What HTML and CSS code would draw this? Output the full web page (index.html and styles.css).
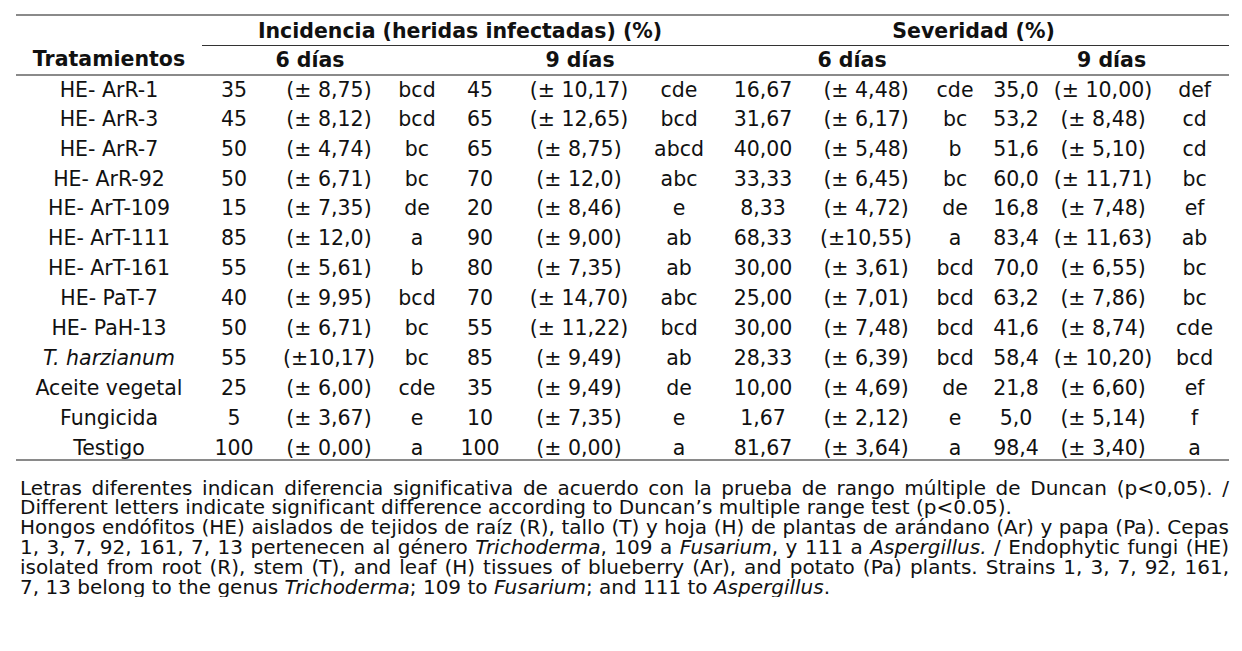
FILE: index.html
```html
<!DOCTYPE html>
<html lang="es">
<head>
<meta charset="utf-8">
<title>Tabla</title>
<link rel="stylesheet" href="styles.css">
</head>
<body>
<div class="page">
<table class="data">
  <colgroup>
    <col class="w1"><col class="w2"><col class="w3"><col class="w4"><col class="w5"><col class="w6"><col class="w7"><col class="w8"><col class="w9"><col class="w10"><col class="w11"><col class="w12"><col class="w13">
  </colgroup>
  <thead>
    <tr class="h1">
      <th class="blank"></th>
      <th colspan="6" class="group">Incidencia (heridas infectadas) (%)</th>
      <th colspan="6" class="group">Severidad (%)</th>
    </tr>
    <tr class="h2">
      <th>Tratamientos</th>
      <th colspan="3" class="d6">6 días</th>
      <th colspan="3">9 días</th>
      <th colspan="3">6 días</th>
      <th colspan="3" class="d9s">9 días</th>
    </tr>
  </thead>
  <tbody>
    <tr><td>HE- ArR-1</td><td>35</td><td>(± 8,75)</td><td>bcd</td><td>45</td><td>(± 10,17)</td><td>cde</td><td>16,67</td><td>(± 4,48)</td><td>cde</td><td>35,0</td><td>(± 10,00)</td><td>def</td></tr>
    <tr><td>HE- ArR-3</td><td>45</td><td>(± 8,12)</td><td>bcd</td><td>65</td><td>(± 12,65)</td><td>bcd</td><td>31,67</td><td>(± 6,17)</td><td>bc</td><td>53,2</td><td>(± 8,48)</td><td>cd</td></tr>
    <tr><td>HE- ArR-7</td><td>50</td><td>(± 4,74)</td><td>bc</td><td>65</td><td>(± 8,75)</td><td>abcd</td><td>40,00</td><td>(± 5,48)</td><td>b</td><td>51,6</td><td>(± 5,10)</td><td>cd</td></tr>
    <tr><td>HE- ArR-92</td><td>50</td><td>(± 6,71)</td><td>bc</td><td>70</td><td>(± 12,0)</td><td>abc</td><td>33,33</td><td>(± 6,45)</td><td>bc</td><td>60,0</td><td>(± 11,71)</td><td>bc</td></tr>
    <tr><td>HE- ArT-109</td><td>15</td><td>(± 7,35)</td><td>de</td><td>20</td><td>(± 8,46)</td><td>e</td><td>8,33</td><td>(± 4,72)</td><td>de</td><td>16,8</td><td>(± 7,48)</td><td>ef</td></tr>
    <tr><td>HE- ArT-111</td><td>85</td><td>(± 12,0)</td><td>a</td><td>90</td><td>(± 9,00)</td><td>ab</td><td>68,33</td><td>(±10,55)</td><td>a</td><td>83,4</td><td>(± 11,63)</td><td>ab</td></tr>
    <tr><td>HE- ArT-161</td><td>55</td><td>(± 5,61)</td><td>b</td><td>80</td><td>(± 7,35)</td><td>ab</td><td>30,00</td><td>(± 3,61)</td><td>bcd</td><td>70,0</td><td>(± 6,55)</td><td>bc</td></tr>
    <tr><td>HE- PaT-7</td><td>40</td><td>(± 9,95)</td><td>bcd</td><td>70</td><td>(± 14,70)</td><td>abc</td><td>25,00</td><td>(± 7,01)</td><td>bcd</td><td>63,2</td><td>(± 7,86)</td><td>bc</td></tr>
    <tr><td>HE- PaH-13</td><td>50</td><td>(± 6,71)</td><td>bc</td><td>55</td><td>(± 11,22)</td><td>bcd</td><td>30,00</td><td>(± 7,48)</td><td>bcd</td><td>41,6</td><td>(± 8,74)</td><td>cde</td></tr>
    <tr><td><i>T. harzianum</i></td><td>55</td><td>(±10,17)</td><td>bc</td><td>85</td><td>(± 9,49)</td><td>ab</td><td>28,33</td><td>(± 6,39)</td><td>bcd</td><td>58,4</td><td>(± 10,20)</td><td>bcd</td></tr>
    <tr><td>Aceite vegetal</td><td>25</td><td>(± 6,00)</td><td>cde</td><td>35</td><td>(± 9,49)</td><td>de</td><td>10,00</td><td>(± 4,69)</td><td>de</td><td>21,8</td><td>(± 6,60)</td><td>ef</td></tr>
    <tr><td>Fungicida</td><td>5</td><td>(± 3,67)</td><td>e</td><td>10</td><td>(± 7,35)</td><td>e</td><td>1,67</td><td>(± 2,12)</td><td>e</td><td>5,0</td><td>(± 5,14)</td><td>f</td></tr>
    <tr class="last"><td>Testigo</td><td>100</td><td>(± 0,00)</td><td>a</td><td>100</td><td>(± 0,00)</td><td>a</td><td>81,67</td><td>(± 3,64)</td><td>a</td><td>98,4</td><td>(± 3,40)</td><td>a</td></tr>
  </tbody>
</table>
<div class="notes">
  <p>Letras diferentes indican diferencia significativa de acuerdo con la prueba de rango múltiple de Duncan (p&lt;0,05). / Different letters indicate significant difference according to Duncan’s multiple range test (p&lt;0.05).</p>
  <p>Hongos endófitos (HE) aislados de tejidos de raíz (R), tallo (T) y hoja (H) de plantas de arándano (Ar) y papa (Pa). Cepas 1, 3, 7, 92, 161, 7, 13 pertenecen al género <i>Trichoderma</i>, 109 a <i>Fusarium</i>, y 111 a <i>Aspergillus.</i> / Endophytic fungi (HE) isolated from root (R), stem (T), and leaf (H) tissues of blueberry (Ar), and potato (Pa) plants. Strains 1, 3, 7, 92, 161, <span class="nw">7, 13</span> belong to the genus <i>Trichoderma</i>; 109 to <i>Fusarium</i>; and 111 to <i>Aspergillus</i>.</p>
</div>
</div>
</body>
</html>
```

FILE: styles.css
```css
html, body {
  margin: 0;
  padding: 0;
  background: #ffffff;
}
body {
  font-family: "DejaVu Sans", Verdana, sans-serif;
  color: #111111;
}
.page {
  padding: 14px 13px 0 16px;
}
.data {
  width: 1213px;
  table-layout: fixed;
  border-collapse: collapse;
  font-size: 20.5px;
  border-top: 2px solid #8a8a8a;
}
.w1 { width: 186px; }
.w2 { width: 64px; }
.w3 { width: 126px; }
.w4 { width: 50px; }
.w5 { width: 76px; }
.w6 { width: 122px; }
.w7 { width: 78px; }
.w8 { width: 90px; }
.w9 { width: 116px; }
.w10 { width: 62px; }
.w11 { width: 60px; }
.w12 { width: 114px; }
.w13 { width: 69px; }
.data th, .data td {
  box-sizing: border-box;
  padding: 0;
  text-align: center;
  white-space: nowrap;
  line-height: 22px;
}
.data th {
  font-weight: bold;
  height: 29.9px;
  vertical-align: middle;
}
.data td {
  height: 29.9px;
  padding-top: 3px;
  vertical-align: top;
}
.h1 th {
  height: 30px;
  padding-top: 2px;
}
.h1 th.group {
  border-bottom: 1px solid #333333;
}
.h2 th {
  border-bottom: 2px solid #8a8a8a;
}
.h2 th.d6 {
  padding-right: 24px;
}
.h2 th.d9s {
  padding-left: 8px;
}
.data tr.last td {
  height: 26px;
  border-bottom: 2px solid #8a8a8a;
}
.notes {
  margin-top: 18px;
  padding-left: 4px;
  font-size: 20px;
  line-height: 19.8px;
  text-align: justify;
}
.notes p {
  margin: 0;
}
.nw {
  white-space: nowrap;
}
```
